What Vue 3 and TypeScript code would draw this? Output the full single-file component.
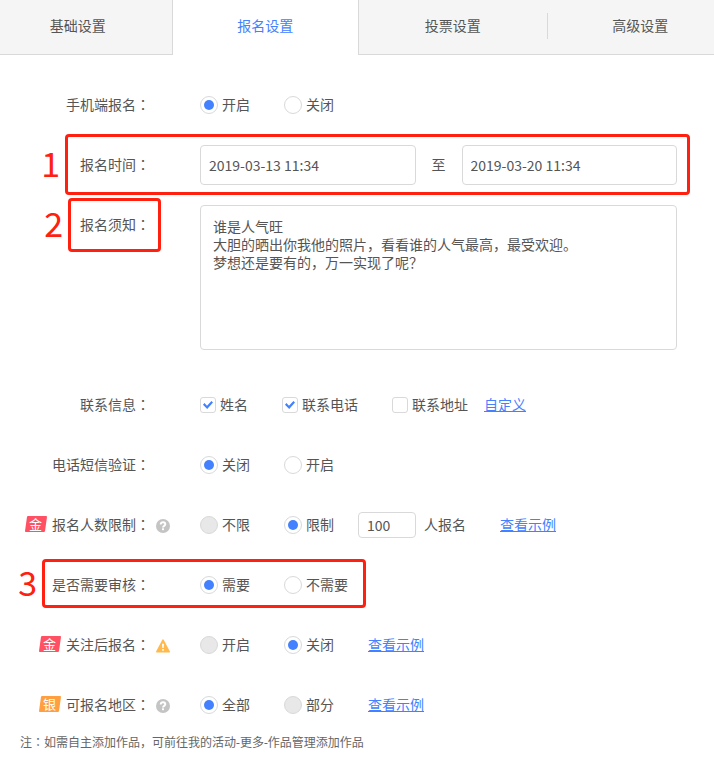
<script setup lang="ts">
import { reactive, ref } from 'vue'

type Badge = 'gold' | 'silver'
type Hint = 'help' | 'warning'

interface Option {
  value: string
  text: string
  disabled?: boolean
}

interface Row {
  key: string
  label: string
  kind: 'radio' | 'dates' | 'notice' | 'contacts'
  badge?: Badge
  hint?: Hint
  options?: Option[]
  quota?: boolean
  link?: string
  mark?: number
}

const tabs = ['基础设置', '报名设置', '投票设置', '高级设置']
const activeTab = ref(1)

const onOff: Option[] = [
  { value: 'on', text: '开启' },
  { value: 'off', text: '关闭' },
]

const rows: Row[] = [
  { key: 'mobile', label: '手机端报名', kind: 'radio', options: onOff },
  { key: 'time', label: '报名时间', kind: 'dates', mark: 1 },
  { key: 'notice', label: '报名须知', kind: 'notice', mark: 2 },
  { key: 'contact', label: '联系信息', kind: 'contacts' },
  {
    key: 'sms',
    label: '电话短信验证',
    kind: 'radio',
    options: [
      { value: 'off', text: '关闭' },
      { value: 'on', text: '开启' },
    ],
  },
  {
    key: 'limit',
    label: '报名人数限制',
    kind: 'radio',
    badge: 'gold',
    hint: 'help',
    options: [
      { value: 'none', text: '不限', disabled: true },
      { value: 'limited', text: '限制' },
    ],
    quota: true,
    link: '查看示例',
  },
  {
    key: 'review',
    label: '是否需要审核',
    kind: 'radio',
    options: [
      { value: 'yes', text: '需要' },
      { value: 'no', text: '不需要' },
    ],
    mark: 3,
  },
  {
    key: 'follow',
    label: '关注后报名',
    kind: 'radio',
    badge: 'gold',
    hint: 'warning',
    options: [
      { value: 'on', text: '开启', disabled: true },
      { value: 'off', text: '关闭' },
    ],
    link: '查看示例',
  },
  {
    key: 'region',
    label: '可报名地区',
    kind: 'radio',
    badge: 'silver',
    hint: 'help',
    options: [
      { value: 'all', text: '全部' },
      { value: 'part', text: '部分', disabled: true },
    ],
    link: '查看示例',
  },
]

const choices = reactive<Record<string, string>>({
  mobile: 'on',
  sms: 'off',
  limit: 'limited',
  review: 'yes',
  follow: 'off',
  region: 'all',
})

const contacts = reactive([
  { id: 'name', text: '姓名', checked: true },
  { id: 'phone', text: '联系电话', checked: true },
  { id: 'address', text: '联系地址', checked: false },
])

const startTime = ref('2019-03-13 11:34')
const endTime = ref('2019-03-20 11:34')
const quota = ref('100')
const notice = ref(
  '谁是人气旺\n大胆的晒出你我他的照片，看看谁的人气最高，最受欢迎。\n梦想还是要有的，万一实现了呢？',
)

const controlId: Record<string, string> = { time: 'start-time', notice: 'notice-text' }
</script>

<template>
  <main class="page">
    <nav class="tabs">
      <button
        v-for="(tab, index) in tabs"
        :key="tab"
        type="button"
        class="tab"
        :class="{ active: index === activeTab }"
        @click="activeTab = index"
      >
        {{ tab }}
      </button>
    </nav>

    <form class="form" @submit.prevent>
      <div
        v-for="row in rows"
        :key="row.key"
        class="row"
        :class="{ tall: row.kind === 'notice' }"
        role="group"
        :aria-labelledby="`${row.key}-label`"
      >
        <div class="caption">
          <span v-if="row.badge" class="badge" :class="row.badge">
            <span class="badge-text">{{ row.badge === 'gold' ? '金' : '银' }}</span>
          </span>
          <component
            :is="controlId[row.key] ? 'label' : 'span'"
            :id="`${row.key}-label`"
            :for="controlId[row.key]"
          >{{ row.label }}<span class="mid">：</span></component>
        </div>

        <div class="hint">
          <svg v-if="row.hint === 'help'" width="14" height="14" viewBox="0 0 14 14" aria-hidden="true">
            <circle cx="7" cy="7" r="7" fill="#c4c4c4" />
            <path
              d="M4.7 5.500C4.700 4 5.700 3.300 7 3.300s2.300.7 2.300 2c0 1.600-2.300 1.600-2.300 3.200"
              fill="none"
              stroke="#fff"
              stroke-width="1.9"
            />
            <rect x="6" y="9.300" width="2" height="1.900" fill="#fff" />
          </svg>
          <svg v-else-if="row.hint === 'warning'" width="14" height="14" viewBox="0 0 14 14" aria-hidden="true">
            <path
              d="M7 1.200 13.200 12.800H.8Z"
              fill="#ffb94d"
              stroke="#ffb94d"
              stroke-width="1.6"
              stroke-linejoin="round"
            />
            <path d="M6 4.800h2l-.3 4.200H6.300Z" fill="#fff" />
            <rect x="6.1" y="10" width="1.8" height="1.700" fill="#fff" />
          </svg>
        </div>

        <div v-if="row.kind === 'dates'" class="dates">
          <input id="start-time" v-model="startTime" class="field" type="text" />
          <label for="end-time">至</label>
          <input id="end-time" v-model="endTime" class="field" type="text" />
        </div>

        <textarea v-else-if="row.kind === 'notice'" id="notice-text" v-model="notice" class="notice"></textarea>

        <div v-else-if="row.kind === 'contacts'" class="choices">
          <label v-for="item in contacts" :key="item.id" class="choice">
            <input v-model="item.checked" type="checkbox" class="check" />{{ item.text }}
          </label>
          <a href="#" class="link near">自定义</a>
        </div>

        <div v-else class="choices">
          <label v-for="option in row.options" :key="option.value" class="choice">
            <input
              v-model="choices[row.key]"
              type="radio"
              class="radio"
              :name="row.key"
              :value="option.value"
              :disabled="option.disabled"
            />{{ option.text }}
          </label>
          <label v-if="row.quota" class="quota">
            <input v-model="quota" class="field small" type="text" />人报名
          </label>
          <a v-if="row.link" href="#" class="link">{{ row.link }}</a>
        </div>

        <div v-if="row.mark" class="mark" :class="`mark-${row.mark}`">
          <span class="mark-number">{{ row.mark }}</span>
        </div>
      </div>
    </form>

    <p class="note">
      注<span class="mid">：</span>如需自主添加作品，可前往我的活动-更多-作品管理添加作品
    </p>
  </main>
</template>

<style>
body {
  margin: 0;
  background: #fff;
}
</style>

<style scoped>
.page {
  overflow: hidden;
  font-family: 'Noto Sans', 'Noto Sans CJK SC', sans-serif;
  font-size: 14px;
  line-height: 20px;
  color: #555;
}

.page * {
  box-sizing: border-box;
}

.mid {
  font-family: 'Noto Sans', 'Noto Sans CJK TC', sans-serif;
}

.tabs {
  display: grid;
  grid-template-columns: repeat(4, 1fr);
  margin: 0 -20px 0 -16px;
}

.tab {
  position: relative;
  height: 55px;
  padding: 0 0 3px;
  border: 0 solid #d9d9d9;
  border-bottom-width: 1px;
  background: #f5f5f5;
  font: inherit;
  color: inherit;
  cursor: pointer;
}

.tab.active {
  border-width: 0 1px;
  background: #fff;
  color: #4381ff;
}

.tab:not(.active) + .tab:not(.active)::before {
  content: '';
  position: absolute;
  left: 0;
  top: 13px;
  width: 1px;
  height: 26px;
  background: #d9d9d9;
}

.form {
  display: flex;
  flex-direction: column;
  gap: 20px;
  padding: 30px 37px 0 0;
}

.row {
  position: relative;
  display: grid;
  grid-template-columns: 150px 50px 1fr;
  min-height: 40px;
  align-items: center;
}

.row.tall {
  min-height: 160px;
  align-items: start;
}

.tall .caption {
  height: 40px;
}

.caption {
  display: flex;
  justify-content: flex-end;
  align-items: center;
  gap: 6px;
  white-space: nowrap;
}

.badge {
  display: flex;
  justify-content: center;
  width: 20px;
  height: 16px;
  margin-bottom: 2px;
  border-radius: 1px;
  transform: skewX(-8deg);
  font-size: 13px;
  line-height: 16px;
  color: #fff;
}

.badge-text {
  transform: skewX(8deg);
}

.badge.gold {
  background: #ff5064;
}

.badge.silver {
  background: #ff9f40;
}

.hint {
  display: flex;
  padding: 2px 0 0 6px;
}

.dates {
  display: flex;
  align-items: center;
  gap: 16px;
}

.field {
  flex: 1;
  min-width: 0;
  height: 40px;
  padding: 0 8px;
  border: 1px solid #d9d9d9;
  border-radius: 4px;
  background: #fff;
  font: inherit;
  font-family: 'Noto Sans CJK SC', sans-serif;
  color: inherit;
}

.field.small {
  flex: none;
  width: 58px;
  height: 26px;
}

.notice {
  height: 145px;
  padding: 12px;
  border: 1px solid #d9d9d9;
  border-radius: 4px;
  background: #fff;
  font: inherit;
  line-height: 18px;
  color: inherit;
  resize: none;
}

.choices {
  display: flex;
  align-items: center;
  gap: 34px;
  white-space: nowrap;
}

.choice {
  display: flex;
  align-items: center;
  gap: 4px;
}

.radio,
.check {
  display: flex;
  justify-content: center;
  align-items: center;
  margin: 0;
  appearance: none;
  border: 1px solid #d9d9d9;
  background: #fff;
}

.radio {
  width: 18px;
  height: 18px;
  border-radius: 50%;
}

.radio:checked::before {
  content: '';
  width: 10px;
  height: 10px;
  border-radius: 50%;
  background: #4381ff;
}

.radio:disabled {
  background: #e8e8e8;
}

.check {
  width: 16px;
  height: 16px;
  border-radius: 3px;
}

.check:checked::before {
  content: '';
  width: 10px;
  height: 8px;
  background: #4381ff;
  clip-path: polygon(0 46%, 14% 26%, 40% 58%, 84% 0, 100% 18%, 42% 100%);
}

.quota {
  display: flex;
  align-items: center;
  gap: 8px;
  margin-left: -10px;
}

.link {
  color: #4381ff;
  text-decoration: underline;
}

.link.near {
  margin-left: -18px;
}

.mark {
  position: absolute;
  border: 3px solid #ff2010;
  border-radius: 4px;
  pointer-events: none;
}

.mark-1 {
  inset: -11px -13px -10px 65px;
}

.mark-2 {
  top: -7px;
  left: 68px;
  width: 93px;
  height: 54px;
}

.mark-3 {
  top: -6px;
  left: 42px;
  width: 324px;
  height: 49px;
}

.mark-number {
  position: absolute;
  top: 0;
  bottom: 0;
  right: 100%;
  display: flex;
  align-items: center;
  padding: 0 8px 4px 0;
  font-family: 'Noto Sans CJK SC', sans-serif;
  font-size: 34px;
  line-height: 40px;
  color: #ff2010;
}

.note {
  margin: 9px 20px 13px;
  font-size: 12px;
  line-height: 18px;
  color: #666;
}
</style>
